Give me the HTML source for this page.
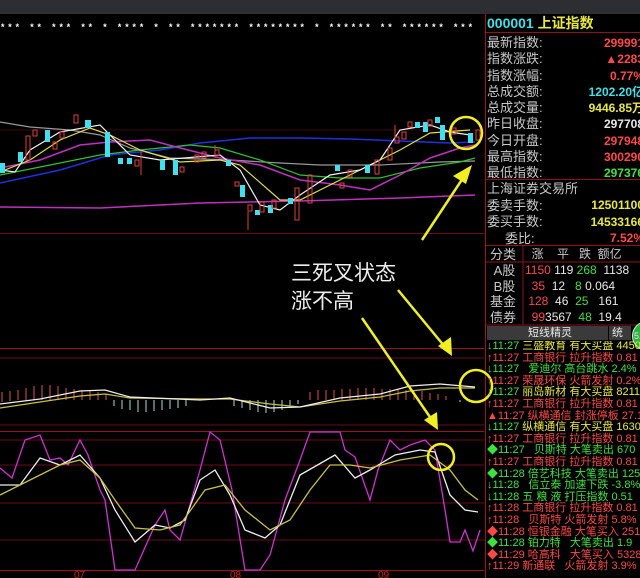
<!DOCTYPE html>
<html><head><meta charset="utf-8"><style>
body{margin:0;width:640px;height:578px;background:#000;overflow:hidden;position:relative;font-family:"Liberation Sans","Noto Sans CJK SC",sans-serif}
.t{position:absolute;white-space:nowrap;font-size:13px;line-height:14px}
.g{color:#c8c8c8}.r{color:#ff4848}.c{color:#40e0e8}.y{color:#e8e840}.gr{color:#40e040}.w{color:#e8e8e8}
.l{position:absolute;font-size:11px;line-height:11.6px;white-space:nowrap;overflow:hidden;width:153px}
</style></head><body>
<div style="position:absolute;left:0;top:0;width:640px;height:14px;background:#2c2e31"></div>
<svg width="640" height="578" style="position:absolute;left:0;top:0" xmlns="http://www.w3.org/2000/svg">
<text x="0" y="30" fill="#fff" font-size="9" font-weight="bold" font-family="Liberation Mono" textLength="473" lengthAdjust="spacing">*** ** *** ** * **** * ** ******* ******** * ****** ** ****** ***</text>
<g stroke="#6a0e18" stroke-width="1">
<line x1="0" y1="233.5" x2="484" y2="233.5"/><line x1="0" y1="130" x2="484" y2="130" stroke="#3a0810"/>
<line x1="0" y1="348.5" x2="484" y2="348.5" stroke="#a01020"/><line x1="0" y1="358" x2="484" y2="358"/>
<line x1="0" y1="425" x2="484" y2="425"/>
<line x1="0" y1="431.5" x2="484" y2="431.5" stroke="#a01020"/>
<line x1="0" y1="440" x2="484" y2="440"/><line x1="0" y1="465" x2="484" y2="465"/><line x1="0" y1="503" x2="484" y2="503"/><line x1="0" y1="540" x2="484" y2="540"/>
<line x1="0" y1="570.5" x2="484" y2="570.5" stroke="#a01020"/>
<line x1="485.5" y1="14" x2="485.5" y2="578" stroke="#a01020"/>
</g>
<g fill="none" stroke-width="1.2">
<polyline stroke="#999" points="0,122 30,127 70,130 100,135 130,148 170,158 230,160 280,163 320,165 380,165 440,162 475,161"/>
<polyline stroke="#2030e0" stroke-width="1.5" points="0,183 60,170 110,155 160,150 200,143 250,138 300,138 350,139 400,141 450,143 475,142"/>
<polyline stroke="#30c030" points="0,175 50,165 100,155 140,150 190,145 220,148 260,160 300,175 340,178 380,178 420,168 460,162 475,158"/>
<polyline stroke="#c030c0" stroke-width="1.5" points="0,168 40,160 80,145 110,142 150,140 180,148 220,158 260,165 300,180 340,185 370,190 400,175 430,158 460,148 475,145"/>
<polyline stroke="#c030c0" stroke-width="1.5" points="0,207 100,208 200,203 300,201 400,198 475,195"/>
<polyline stroke="#e0e040" points="0,172 30,160 60,140 90,128 110,135 140,150 180,162 220,160 240,165 280,200 300,200 330,185 370,165 400,150 430,133 470,130"/>
<polyline stroke="#eee" points="0,170 15,172 30,150 60,132 100,125 130,155 160,160 220,155 240,170 260,205 280,210 300,195 330,175 360,170 380,160 400,130 430,125 450,132 470,135"/>
</g>
<g fill="#40e0f0">
<rect x="0" y="163" width="5" height="10"/><rect x="18" y="152" width="5" height="10"/><rect x="45" y="130" width="5" height="12"/><rect x="85" y="120" width="6" height="8"/><rect x="105" y="132" width="5" height="25"/><rect x="118" y="158" width="5" height="6"/><rect x="127" y="158" width="5" height="6"/><rect x="160" y="160" width="5" height="10"/><rect x="173" y="160" width="5" height="15"/><rect x="226" y="160" width="5" height="6"/><rect x="240" y="185" width="5" height="12"/><rect x="255" y="210" width="5" height="5"/><rect x="268" y="205" width="5" height="8"/><rect x="288" y="198" width="5" height="6"/><rect x="335" y="165" width="5" height="6"/><rect x="365" y="165" width="5" height="8"/><rect x="415" y="122" width="5" height="6"/><rect x="423" y="122" width="5" height="10"/><rect x="435" y="117" width="5" height="6"/><rect x="440" y="125" width="5" height="15"/><rect x="468" y="133" width="5" height="10"/>
</g>
<g fill="none" stroke="#e04040">
<rect x="26" y="136" width="4" height="24"/><rect x="33" y="130" width="4" height="6"/><rect x="53" y="142" width="4" height="7"/><rect x="60" y="132" width="4" height="6"/><rect x="74" y="115" width="4" height="8"/><rect x="135" y="160" width="4" height="6"/><rect x="180" y="167" width="4" height="5"/><rect x="195" y="155" width="4" height="7"/><rect x="202" y="152" width="4" height="6"/><rect x="215" y="150" width="4" height="5"/><rect x="235" y="182" width="4" height="4"/><rect x="248" y="205" width="4" height="6"/><rect x="260" y="202" width="4" height="10"/><rect x="272" y="200" width="4" height="8"/><rect x="295" y="188" width="4" height="32"/><rect x="308" y="175" width="4" height="28"/><rect x="340" y="183" width="4" height="5"/><rect x="348" y="170" width="4" height="7"/><rect x="375" y="160" width="4" height="14"/><rect x="388" y="148" width="4" height="12"/><rect x="395" y="137" width="4" height="6"/><rect x="402" y="132" width="4" height="7"/><rect x="408" y="122" width="4" height="5"/><rect x="428" y="120" width="4" height="6"/><rect x="452" y="128" width="4" height="6"/><rect x="476" y="130" width="4" height="10"/>
</g>
<g stroke="#e04040"><line x1="141" y1="152" x2="141" y2="175"/><line x1="248" y1="212" x2="248" y2="230"/><line x1="395" y1="125" x2="395" y2="143"/><line x1="215" y1="145" x2="215" y2="158"/></g>
<g stroke="#e05050" stroke-width="1">
<path d="M2 392v10M10 391v10M18 390v10M26 388v12M34 386v14M42 385v15M50 385v15M58 386v14M66 388v12M74 389v11M82 390v10M90 391v9M98 392v8M106 394v6M310 392v8M318 390v10M326 390v10M334 390v10M342 389v11M350 389v11M358 388v12M366 388v12M374 388v12M382 389v11M390 389v11M398 389v11M406 390v10M414 390v10M422 391v9M430 393v7M438 394v6M446 396v4"/>
</g>
<g stroke="#a0e0d0" stroke-width="1">
<path d="M114 400v6M122 400v9M130 400v10M138 400v12M146 400v12M154 400v11M162 400v10M170 400v9M178 400v8M186 400v6M234 400v6M242 400v8M250 400v10M258 400v12M266 400v13M274 400v12M282 400v10M290 400v7M298 400v4M460 400v2M470 400v2"/>
</g>
<g fill="none" stroke-width="1.2">
<polyline stroke="#c8c040" points="0,408 40,402 80,396 105,394 130,398 200,399 230,399 270,404 300,407 340,401 380,397 410,391 440,388 475,388"/>
<polyline stroke="#eee" points="0,404 40,399 80,391 105,390 130,397 200,400 230,398 270,408 300,407 340,398 380,394 410,386 440,384 475,387"/>
</g>
<g fill="none" stroke-width="1.3">
<polyline stroke="#d030d0" points="0,468 12,478 25,440 40,435 50,460 60,458 68,465 80,440 88,455 100,490 105,500 115,570 135,570 155,525 165,510 170,530 180,540 200,470 210,432 220,440 232,490 245,570 260,570 270,555 285,500 300,460 310,432 340,432 345,450 355,457 370,500 378,470 390,440 400,450 410,445 425,440 435,450 445,510 450,542 460,542 465,530 473,551 480,530"/>
<polyline stroke="#eee" points="0,485 20,485 40,458 60,465 80,455 100,478 115,510 135,542 155,525 170,528 185,520 200,480 215,470 230,495 245,530 265,538 280,525 300,475 335,455 355,478 370,470 395,455 420,450 435,452 450,495 465,510 478,512"/>
<polyline stroke="#c8c040" points="0,495 30,480 60,465 80,460 100,478 115,500 135,528 160,530 180,525 205,490 225,485 245,510 270,530 290,520 310,490 330,465 350,465 370,468 400,460 430,455 450,470 465,490 478,500"/>
</g>
<g fill="#d02020" font-size="10" font-family="Liberation Sans"><text x="74" y="578">07</text><text x="230" y="578">08</text><text x="378" y="578">09</text></g>
<g fill="none" stroke="#f0f020" stroke-width="2.5">
<circle cx="466" cy="133" r="16"/><circle cx="476" cy="386" r="16"/><circle cx="441" cy="457" r="13"/>
<line x1="422" y1="240" x2="463" y2="178"/><line x1="398" y1="290" x2="445" y2="347"/><line x1="362" y1="318" x2="432" y2="420"/>
</g>
<g fill="#f0f020"><polygon points="472,165 453,176 466,184"/><polygon points="452,356 438,346 451,337"/><polygon points="438,430 424,420 437,412"/></g>
<text x="291" y="280" fill="#eee" font-size="21" font-family="Noto Sans CJK SC">三死叉状态</text>
<text x="291" y="308" fill="#eee" font-size="21" font-family="Noto Sans CJK SC">涨不高</text>
<g stroke="#901020"><line x1="486" y1="32.5" x2="640" y2="32.5"/><line x1="486" y1="179.5" x2="640" y2="179.5"/><line x1="486" y1="245.5" x2="640" y2="245.5"/><line x1="486" y1="262" x2="640" y2="262"/><line x1="523" y1="246" x2="523" y2="325"/><line x1="486" y1="325" x2="640" y2="325"/></g>
</svg>
<div class="t" style="left:487px;top:15px;font-size:14px;font-weight:bold;line-height:17px"><span class="c">000001</span> <span class="y">上证指数</span></div>
<div class="t g" style="left:487px;top:35px;line-height:16.3px">最新指数:<br>指数涨跌:<br>指数涨幅:<br>总成交额:<br>总成交量:<br>昨日收盘:<br>今日开盘:<br>最高指数:<br>最低指数:</div>
<div class="t" style="right:-4px;top:35px;line-height:16.3px;text-align:right;font-size:12px;font-weight:bold">
<span class="r">299991</span><br><span class="r">▲2283</span><br><span class="r">0.77%</span><br><span class="c">1202.20亿</span><br><span class="y">9446.85万</span><br><span class="w">297708</span><br><span class="r">297948</span><br><span class="r">300290</span><br><span class="gr">297376</span></div>
<div class="t g" style="left:487px;top:181px;line-height:16.5px">上海证券交易所<br>委卖手数:<br>委买手数:<br>&nbsp;&nbsp;&nbsp;&nbsp;&nbsp;委比:</div>
<div class="t" style="right:-4px;top:197px;line-height:16.5px;font-size:12px;font-weight:bold;text-align:right"><span class="y">12501100</span><br><span class="y">14533166</span><br><span class="r">7.52%</span></div>
<div class="t g" style="left:490px;top:247px;line-height:15.8px">分类<br>&nbsp;A股<br>&nbsp;B股<br>基金<br>债券</div>
<div class="t" style="left:525px;top:247px;line-height:15.8px;font-size:12px;width:115px;overflow:hidden"><span class="g">&nbsp;&nbsp;涨&nbsp;&nbsp;&nbsp;&nbsp;平&nbsp;&nbsp;&nbsp;跌&nbsp;&nbsp;额亿</span><br><span class="r">1150</span> <span class="w">119</span> <span class="gr">268</span> <span class="w">&nbsp;1138</span><br><span class="r">&nbsp;&nbsp;35</span> <span class="w">&nbsp;12</span> <span class="gr">&nbsp;&nbsp;8</span> <span class="w">0.064</span><br><span class="r">&nbsp;128</span> <span class="w">&nbsp;46</span> <span class="gr">&nbsp;25</span> <span class="w">&nbsp;&nbsp;161</span><br><span class="r">&nbsp;&nbsp;99</span><span class="w">3567</span> <span class="gr">&nbsp;48</span> <span class="w">&nbsp;19.4</span></div>
<div style="position:absolute;left:487px;top:326px;width:121px;height:14px;background:#3a3a3a"></div>
<div style="position:absolute;left:609px;top:326px;width:22px;height:14px;background:#3a3a3a"></div>
<div class="t w" style="left:528px;top:326px;font-size:11px">短线精灵</div>
<div class="t w" style="left:612px;top:326px;font-size:11px">统</div>
<div style="position:absolute;left:632px;top:321px;width:28px;height:28px;border-radius:50%;background:#30b040;border:1px solid #c0ffc0"></div>
<div class="t w" style="left:634px;top:329px;font-size:9px">51</div>
<div class="l" style="left:487px;top:341px">
<span class="gr">↓11:27</span> <span class="y">三盛教育 有大买盘 4450</span><br>
<span class="r">↑11:27 工商银行 拉升指数 0.81</span><br>
<span class="gr">↓11:27 &nbsp;&nbsp;爱迪尔 高台跳水 2.4%</span><br>
<span class="r">↑11:27 荣晟环保 火箭发射 0.2%</span><br>
<span class="gr">↓11:27</span> <span class="y">丽岛新材 有大买盘 8211</span><br>
<span class="r">↑11:27 工商银行 拉升指数 0.81</span><br>
<span class="r">▲11:27 纵横通信 封涨停板 27.17</span><br>
<span class="gr">↓11:27</span> <span class="y">纵横通信 有大买盘 16304</span><br>
<span class="r">↑11:27 工商银行 拉升指数 0.81</span><br>
<span class="gr">◆11:27 &nbsp;&nbsp;贝斯特 大笔卖出 670</span><br>
<span class="r">↑11:27 工商银行 拉升指数 0.81</span><br>
<span class="gr">◆11:28 倍艺科技 大笔卖出 1257</span><br>
<span class="gr">↓11:28 &nbsp;&nbsp;信立泰 加速下跌 -3.8%</span><br>
<span class="gr">↓11:28 五 粮 液 打压指数 0.51</span><br>
<span class="r">↑11:28 工商银行 拉升指数 0.81</span><br>
<span class="r">↑11:28 &nbsp;&nbsp;贝斯特 火箭发射 5.8%</span><br>
<span class="r">◆11:28 恒银金融 大笔买入 2515</span><br>
<span class="gr">◆11:28 铂力特 &nbsp;&nbsp;大笔卖出 1.9</span><br>
<span class="r">◆11:29 哈高科 &nbsp;&nbsp;大笔买入 5328</span><br>
<span class="r">↑11:29 新通联 &nbsp;&nbsp;火箭发射 3.9%</span>
</div>
</body></html>
